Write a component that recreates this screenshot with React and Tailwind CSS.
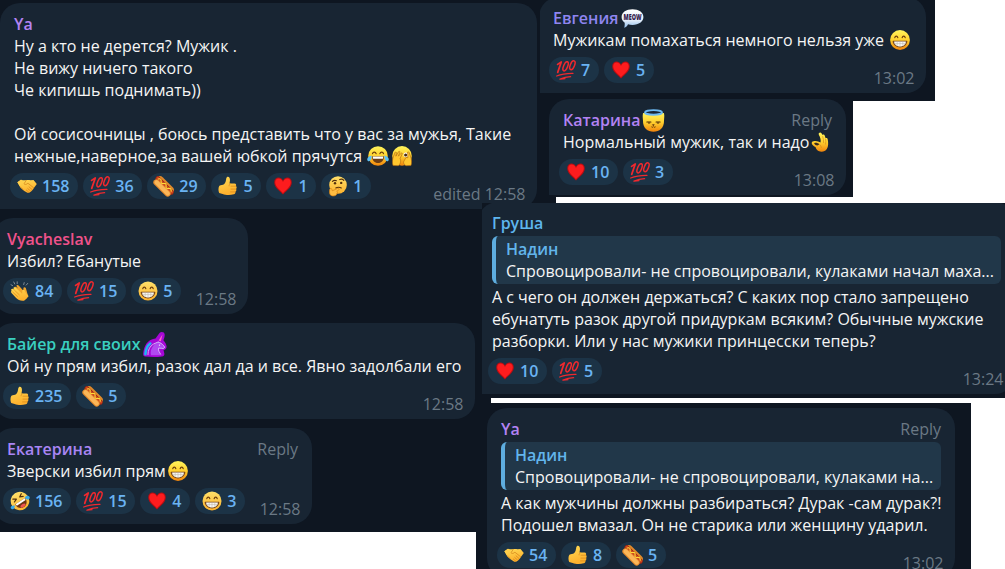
import React from 'react';
import clsx from 'clsx';

// Shared gradients for all emoji
const EmojiDefs = () => (
  <svg className="absolute w-0 h-0" aria-hidden="true">
    <defs>
      <linearGradient id="face" x1="0" y1="0" x2="0" y2="1">
        <stop offset="0" stopColor="#fff45c" />
        <stop offset="0.5" stopColor="#ffd02f" />
        <stop offset="1" stopColor="#f0840c" />
      </linearGradient>
      <linearGradient id="faceFlat" x1="0" y1="0" x2="0" y2="1">
        <stop offset="0" stopColor="#ffe06a" />
        <stop offset="1" stopColor="#fdb22c" />
      </linearGradient>
      <linearGradient id="hand" x1="0" y1="0" x2="0.3" y2="1">
        <stop offset="0" stopColor="#ffdb55" />
        <stop offset="1" stopColor="#fdb02d" />
      </linearGradient>
      <linearGradient id="bubble" x1="0" y1="0" x2="0" y2="1">
        <stop offset="0" stopColor="#ffffff" />
        <stop offset="0.6" stopColor="#e2edfa" />
        <stop offset="1" stopColor="#8fbdec" />
      </linearGradient>
    </defs>
  </svg>
);

const Heart = () => (
  <>
    <path d="M10 18.6C8.6 16 1.2 12 1.2 6.4 1.2 3.4 3.2 1.6 5.5 1.6c2 0 3.6 1.1 4.5 3 .9-1.9 2.5-3 4.5-3 2.3 0 4.3 1.8 4.3 4.8 0 5.600-7.400 9.600-8.800 12.200z" fill="#b80d12" />
    <path d="M10 17.400C8.500 14.900 2.200 11.300 2.200 6.300 2.200 4 3.700 2.500 5.600 2.500c2 0 3.600 1.500 4.400 3.500.8-2 2.400-3.500 4.400-3.500 1.900 0 3.400 1.500 3.400 3.800 0 5-6.300 8.600-7.800 11.100z" fill="#fd1c1e" />
  </>
);

const Hundred = () => (
  <g fill="none" stroke="#f0292e" strokeLinecap="round" strokeLinejoin="round">
    <path d="M1.600 4.400 5.300 1.900 1.700 12.400" strokeWidth="1.700" />
    <ellipse cx="9.600" cy="6.300" rx="2" ry="4.900" transform="rotate(22 9.600 6.300)" strokeWidth="1.500" />
    <ellipse cx="16.400" cy="5.200" rx="2.100" ry="4.700" transform="rotate(22 16.400 5.200)" strokeWidth="1.500" />
    <path d="M.7 16C5.500 14 11 13.200 17 13.300M4 19.200c3.400-1.500 6.700-2.300 10.600-2.500M4 19.200l5-.6" strokeWidth="1.300" />
  </g>
);

const Handshake = () => (
  <>
    <path d="M.4 6.200 4 3.700c2 .9 3.700.7 5.200.4 1.600-.4 3-.1 4.400.2L16.500 4l3.300 4-2.900 3.900c-.8 1.700-2.400 3.200-4 4.300-1.100.9-2.500.8-3.400 0C7 15 4.900 13.500 3.300 11.600z" fill="url(#hand)" />
    <path d="M9.300 4.300 7 7.700c.9 1.300 2.600.8 3.900-.5l5.700 4.600M13.400 14.900l-2.700-2.400M15 13.500l-3-2.700M11.600 16l-2.300-2M3.600 11.300l2.500 2.200" fill="none" stroke="#c97512" strokeWidth=".6" strokeLinecap="round" />
    <path d="M.4 6.200 4 3.700 6 5 2.800 10z" fill="#ffce4b" />
  </>
);

const HotDog = () => (
  <g transform="rotate(45 10 10)">
    <rect x="-.8" y="4.800" width="21.600" height="7.500" rx="3.700" fill="#e08a2b" />
    <rect x="-2" y="6.700" width="24" height="5" rx="2.500" fill="#9f2812" />
    <rect x="-1.200" y="7.600" width="22.400" height="2.600" rx="1.300" fill="#d04a1f" />
    <rect x="-1" y="9.800" width="22" height="6" rx="3" fill="#e58a2c" />
    <rect x="0" y="10.500" width="20" height="4.200" rx="2.100" fill="#fbb658" />
    <path d="M1 9c1.300-2 2.300-2 3.500-.4s2.300 1.500 3.500-.2 2.300-1.500 3.500.2 2.300 1.500 3.500-.2 2.300-1.500 3.800.2" fill="none" stroke="#ffdd38" strokeWidth="1.100" strokeLinecap="round" />
  </g>
);

const ThumbsUp = () => (
  <>
    <path d="M1.400 9.700c1.700-.6 3.400-.7 4.600-1.500C7.700 6.700 8 4.400 8.300 2.300 8.600.4 10.700.2 11.500 1.800c.8 1.700.4 3.900 0 5.700h5c1.600.1 2.100 1.500 1.400 2.500 1.100.8 1 2.300.1 3 .7 1 .4 2.300-.7 2.800.4 1.100-.2 2.300-1.500 2.500-3.900.9-8.200.8-11.100-.4-1.100-.4-2.500-.4-3.500-.9-1-2-1-5.700.2-7.300z" fill="url(#hand)" />
    <path d="M13 10.200h4.700M13 13.100h4.900M12.600 15.900h4.500M12.400 7.700c-.9.500-1.300 1.300-1.300 2.200" fill="none" stroke="#dc8a1c" strokeWidth=".8" strokeLinecap="round" />
  </>
);

const Thinking = () => (
  <>
    <circle cx="10" cy="9" r="8.800" fill="url(#faceFlat)" />
    <circle cx="7" cy="7.300" r="1.200" fill="#53300d" />
    <circle cx="13.200" cy="6.900" r="1.200" fill="#53300d" />
    <path d="M4.400 5.300c1.200-1 2.700-1.200 4-.6M11.700 3.600c1.400-.8 3-.5 4.100.7M7.800 12c1.800-1.100 3.700-1 5.500-.1" fill="none" stroke="#53300d" strokeWidth="1.100" strokeLinecap="round" />
    <path d="M1.700 13.400c.4-1.400 1.900-1.300 2.200.1l.4 1.300 5.300-2.400c1.400-.4 2 1.100.8 1.900l-1.700 1c1.100.6.9 1.700.2 2.200-.1 1.600-1.900 2.600-4.200 2.400-2.700-.2-3.700-2.400-3-6.500z" fill="#ffbe43" stroke="#d78314" strokeWidth=".7" />
  </>
);

const Clap = () => (
  <>
    <path d="M4.200 6.200C5.500 5 6.700 6.100 8 7.500L6.300 4.800c.9-1.300 2.200-.6 3.300.8l4 4.500-.2-3c.4-1.300 1.900-1.300 2.400 0l1.600 5.500c1.300 4.200-1.800 7.100-5.700 6.400z" fill="#f2a52b" />
    <path d="M1.300 8.300c.9-1.100 2-.5 3 .5L3.300 7c.8-1.200 2-.8 3 .2l5.800 5.600c.4-1.400-.1-2.600.3-3.500.9-1.100 2.100-.5 2.600.9.6 2.400 3.100 3.100 3.600 5.100l-4.500 4.400c-3.200.6-6-.6-8.200-2.900L1.500 12c-.8-.9-.4-1.900.3-2.200-.7-.4-.9-1-.5-1.500z" fill="url(#hand)" />
    <path d="m4.500 9.200 4.800 4.600M2.700 11l4.800 4.500" fill="none" stroke="#dc8a1c" strokeWidth=".7" strokeLinecap="round" />
    <path d="M1 3.700l1.700 1M3.800 1l.9 2M7.200.8v1.900M14.200 1.600l-.5 2M17.700 2.400l-1.500 1.700" fill="none" stroke="#7f8b94" strokeWidth="1" strokeLinecap="round" />
  </>
);

const Grin = ({ glossy }) => (
  <>
    <circle cx="10" cy="10" r={glossy ? 9.9 : 9.5} fill={glossy ? 'url(#face)' : 'url(#faceFlat)'} />
    <path d="M4.800 7.700c.5-2 2.500-2 3 0M12.200 7.700c.5-2 2.500-2 3 0" fill="none" stroke="#6b3d0d" strokeWidth="1.200" strokeLinecap="round" />
    <path d="M3.500 10.700h13c.6 0 .9.400.8 1-.6 3.400-3.500 5.700-7.300 5.700s-6.700-2.300-7.300-5.700c-.1-.6.2-1 .8-1z" fill="#7c4a1c" />
    <path d="M4.200 11.400h11.600c.3 2.800-2.500 5-5.800 5s-6.100-2.200-5.800-5z" fill="#f8f8f4" />
    <path d="M4.400 13.600h11.200M7.200 11.500v4.100M10 11.500v4.800M12.800 11.500v4.100" stroke="#b8aea0" strokeWidth=".5" />
  </>
);

const Rofl = () => (
  <>
    <g transform="rotate(-33 10 10)">
      <circle cx="10" cy="10" r="9.300" fill="url(#faceFlat)" />
      <path d="m5 4.600 3 1.800-3.200 1.400M15 4.600l-3 1.800 3.200 1.400" fill="none" stroke="#53300d" strokeWidth="1.200" strokeLinecap="round" strokeLinejoin="round" />
      <path d="M4 10.300h12c.2 4-2.500 7-6 7s-6.200-3-6-7z" fill="#6d3411" />
      <path d="M4.500 10.300h11l-.3 2H4.800z" fill="#fff" />
      <ellipse cx="10" cy="15.500" rx="3" ry="1.500" fill="#ee5350" />
    </g>
    <path d="M4.800 14.600C2.500 14 .6 15 .7 16.700c.3 1.700 2.700 2.100 3.500.5.500-.8.600-1.600.6-2.600z" fill="#38a9ea" />
    <path d="M14.700 6.500c1.200-2 3.400-2.300 4.600-1 1.200 1.400-.1 3.400-1.900 3.100-1.100-.2-1.900-1.100-2.700-2.100z" fill="#38a9ea" />
  </>
);

const Joy = () => (
  <>
    <circle cx="10" cy="10" r="9.800" fill="url(#face)" />
    <path d="M4.500 7.600c.6-2 3-2 3.600 0M11.900 7.600c.6-2 3-2 3.600 0" fill="none" stroke="#6b3d0d" strokeWidth="1.200" strokeLinecap="round" />
    <path d="M4 10.300h12c0 4-2.600 6.800-6 6.800s-6-2.800-6-6.800z" fill="#6b3d16" />
    <path d="M4.700 10.600h10.600l-.4 2.200H5.100z" fill="#fff" />
    <path d="M3.700 9.700C1.500 9.600-.8 11.400-.8 13.500c0 2 2.500 2.400 3.500.6.700-1.300.9-2.900 1-4.400zM16.300 9.700c2.200-.1 4.500 1.700 4.500 3.800 0 2-2.500 2.400-3.500.6-.7-1.300-.9-2.900-1-4.400z" fill="#5cc0f5" />
  </>
);

const Peeking = () => (
  <>
    <circle cx="10" cy="9.900" r="9.800" fill="url(#face)" />
    <circle cx="13.800" cy="8.900" r="2.300" fill="#fff" />
    <circle cx="13.600" cy="9" r="1.500" fill="#4a2a0b" />
    <path d="M1 19.500C0 17 .4 13 1.400 10.700L3 6.500c.6-1 1.500-.6 1.400.4l-.5 3.300L6.500 5.700c.6-.9 1.700-.4 1.300.6L6.400 10.200l2.700-3c.8-.7 1.600.1 1 1L8 12.800c.5.700.8 1.400.7 2.200-.2 2-1 3.600-2.300 4.700zM19 19.500c1-2.500.6-6.500-.4-8.800L17 6.300c-.6-1-1.500-.6-1.400.4l.3 5-2-.2-1.600 3c-.5.700-.8 1.400-.7 2.200.2 1.300 1 2 2.300 3z" fill="#ffc62e" stroke="#a9630f" strokeWidth=".6" />
  </>
);

const OkHand = () => (
  <>
    <path d="M8 1.100C9.200-.3 10.700.7 11.500 3c.6-.7 1.900-.6 2.200.5l.9 2.700c.9-.6 1.900-.1 2.100 1 .7 3.600.8 7.200-.9 9.900-1.700 2.700-5.300 3.300-8.300 2-1.700-.8-2.500-2.400-3-4C3 14.500 1 12.900.7 11.200c-.2-1.700 1.800-2.400 3.600-2.200 1.900.2 3.900.8 5.200 1.600.6-2.800-.2-5.300-1.600-7.700-.4-.7-.3-1.300.1-1.800z" fill="url(#face)" />
    <path d="M3.100 11.200c1.600-.8 3.900-.3 5.200 1.100-1.300 1.900-4 1.300-5.200-1.100z" fill="#3a2a1d" />
    <path d="M11.700 4.500c.7 2 1 4 .9 6.200M14.600 7.200c.3 1.700.3 3.300 0 4.900M8.600 12.500c.9.800 1.600 1.800 1.700 3" fill="none" stroke="#cf8515" strokeWidth=".6" strokeLinecap="round" />
  </>
);

const Meow = () => (
  <>
    <path d="M11.500.3c6.200 0 10.900 3 10.900 7.700 0 4.600-4.600 7.900-10.900 7.900-1.700 0-3.200-.2-4.500-.7-.7 1.800-1.900 3-3.900 3.600.6-1.400.7-3 .6-5C1.700 12.300.6 10.400.6 8 .6 3.300 5.300.3 11.500.3z" fill="url(#bubble)" />
    <text x="0" y="0" transform="translate(11.500 11.400) scale(.72 1)" textAnchor="middle" className="text-[9.500px] font-extrabold font-['Open_Sans',sans-serif]" fill="#32194d" textLength="25" lengthAdjust="spacingAndGlyphs">MEOW</text>
  </>
);

const AngelCat = () => (
  <>
    <path d="M1 4.200c2.300-.5 4 .7 5.500 1.600 3.300-.6 7-.6 10.200 0C18.300 4.900 20 3.700 22 4.200c.6 2.700.1 5.100 0 7.500.2 7.300-4.700 11-10.500 11S.8 19 1 11.700C.9 9.300.4 6.900 1 4.200z" fill="url(#face)" />
    <ellipse cx="11.500" cy="3.400" rx="8.500" ry="2.300" fill="none" stroke="#6cb9f2" strokeWidth="1.900" />
    <path d="M4.900 13h4M14.100 13h4" stroke="#4c2808" strokeWidth="1.200" strokeLinecap="round" />
    <path d="M6 14h2.200M14.900 14h2.200" stroke="#4c2808" strokeWidth="1" />
    <path d="M10.900 15.700h1.300l-.600.700zM9.700 18c.7.500 1.300.4 1.800-.3.500.7 1.100.8 1.800.3" fill="none" stroke="#4c2808" strokeWidth=".8" strokeLinecap="round" />
  </>
);

const Unicorn = () => (
  <>
    <path d="M16.500 1C18-.5 21.600-.2 21.700 2.700c0 2.200-.6 3.800-1.300 5.500 1.700 2 3.100 4.200 3.200 6.400 0 2.200-1.300 3.400-3.100 3.400l.8 3.300c.4 1.900-.5 3-2.300 3.200-5.500.7-11.200.6-16.700.1C.6 24.400 0 23 .2 21.400.9 15.300 3.300 10.200 7.500 8c1.700-1.100 3.500-1.300 5-1.600z" fill="#a607d6" />
    <path d="M15.600 8.600 19.600 2.300 17.800 9.300z" fill="#ff62c6" />
    <path d="M2.400 22.200c.3-4.500 1.600-8.200 4.900-10.700" fill="none" stroke="#1fb5f3" strokeWidth="2.600" strokeLinecap="round" />
    <path d="M8 23.200c-.7-3.400 0-6.700 2.300-9.500 1.300-1.600 2.700-2.600 4.500-3.200l.6-1.400 1.200 1.500c2.300 1 4 2.600 5 4.500-.3 1.500-1.400 1.700-2.700 1.200l-3.300-.2c-.7 2.500 1 4.500 2 7.100z" fill="#b04af0" />
    <path d="M5 22.500c0-4.300 1.700-8.200 5.600-10.500l4.400-2 1.600.6c2.300 1 4 2.600 5 4.500-.3 1.500-1.400 1.700-2.700 1.200l-3.300-.2c-.7 2.500 1 4.100 2 6.100" fill="none" stroke="#d9c4ff" strokeWidth=".9" strokeLinejoin="round" strokeLinecap="round" />
    <circle cx="16.500" cy="13.100" r=".7" fill="#fff" />
  </>
);

const icons = {
  heart: Heart,
  hundred: Hundred,
  handshake: Handshake,
  hotdog: HotDog,
  thumb: ThumbsUp,
  thinking: Thinking,
  clap: Clap,
  grin: Grin,
  rofl: Rofl,
};

// Emoji inside a line of text
const Inline = ({ children, className, box = '0 0 20 20' }) => (
  <svg viewBox={box} className={clsx('inline-block shrink-0 overflow-visible', className)}>
    {children}
  </svg>
);

const Reaction = ({ icon, count }) => {
  const Icon = icons[icon];
  return (
    <div className="flex h-[26px] items-center gap-[5px] rounded-full bg-[#1c3346] pl-[7px] pr-[8.800px] font-semibold text-[#6ab3f3]">
      <svg viewBox="0 0 20 20" className="size-5 overflow-visible"><Icon /></svg>
      <span>{count}</span>
    </div>
  );
};

const Quote = ({ text }) => (
  <div className="my-0.5 h-12 rounded-md border-l-4 border-[#5eaddf] bg-[#213749] px-2.5 py-0.5">
    <div className="font-semibold text-[#62b5ec]">Надин</div>
    <div className="whitespace-nowrap">{text}</div>
  </div>
);

const Message = ({ name, color, badge, reply, quote, lines, reactions, time, className }) => (
  <article className={clsx('flex shrink-0 flex-col bg-[#182533] px-3.5 py-2.5', className)}>
    <header className="flex h-[22px] justify-between">
      <div className={clsx('flex items-center whitespace-nowrap font-semibold', color)}>{name}{badge}</div>
      {reply && <span className="text-[#6b7985]">Reply</span>}
    </header>
    {quote && <Quote text={quote} />}
    {lines.map((line, i) => (
      <div key={i} className="flex h-[22px] items-center whitespace-pre">{line}</div>
    ))}
    <footer className="-mx-1 mt-1.5 flex h-[26px] gap-[5px]">
      {reactions.map(([icon, count]) => <Reaction key={icon} icon={icon} count={count} />)}
      <span className="ml-auto mr-[1.500px] mt-2.5 whitespace-nowrap text-[#6b7985]">{time}</span>
    </footer>
  </article>
);

const App = () => (
  <main className="flex h-[569px] w-[1005px] overflow-hidden bg-white font-['Open_Sans','Noto_Sans',sans-serif] text-base leading-[22px] text-[#f5f5f5]">
    <EmojiDefs />

    {/* Left side of the feed */}
    <div className="w-[476px] shrink-0">
      <section className="flex h-[209px] w-[556px] flex-col bg-[#0e1621] pt-[3px]">
        <Message
          className="w-[537px] rounded-t-[20px] rounded-br-[20px]"
          name="Ya"
          color="text-[#b383f3]"
          lines={[
            'Ну а кто не дерется? Мужик .',
            'Не вижу ничего такого',
            'Че кипишь поднимать))',
            '',
            'Ой сосисочницы , боюсь представить что у вас за мужья, Такие',
            <>
              {'нежные,наверное,за вашей юбкой прячутся '}
              <Inline className="ml-0.5 size-5"><Joy /></Inline>
              <Inline className="ml-1 size-5"><Peeking /></Inline>
            </>,
          ]}
          reactions={[['handshake', 158], ['hundred', 36], ['hotdog', 29], ['thumb', 5], ['heart', 1], ['thinking', 1]]}
          time="edited 12:58"
        />
      </section>
      <section className="flex h-[194px] w-[491px] flex-col gap-[9px] bg-[#0e1621] pt-[9px]">
        <Message
          className="-ml-[7px] w-[255px] rounded-[20px]"
          name="Vyacheslav"
          color="text-[#f0528b]"
          lines={['Избил? Ебанутые']}
          reactions={[['clap', 84], ['hundred', 15], ['grin', 5]]}
          time="12:58"
        />
        <Message
          className="-ml-[7px] w-[482px] rounded-[20px]"
          name="Байер для своих"
          color="text-[#3ad0c0]"
          badge={<Inline box="0 0 24 25" className="ml-[3px] h-[25px] w-6"><Unicorn /></Inline>}
          lines={['Ой ну прям избил, разок дал да и все. Явно задолбали его']}
          reactions={[['thumb', 235], ['hotdog', 5]]}
          time="12:58"
        />
      </section>
      <section className="flex h-[129px] flex-col bg-[#0e1621] pt-[25px]">
        <Message
          className="-ml-[7px] w-[319px] rounded-[20px]"
          name="Екатерина"
          color="text-[#a985f5]"
          reply
          lines={[<>Зверски избил прям<Inline className="ml-0.5 size-5"><Grin glossy /></Inline></>]}
          reactions={[['rofl', 156], ['hundred', 15], ['heart', 4], ['grin', 3]]}
          time="12:58"
        />
      </section>
    </div>

    {/* Right side of the feed, lies over the left one */}
    <div className="z-10 w-[529px] shrink-0">
      <section className="ml-16 flex h-[101px] w-[395px] flex-col overflow-hidden bg-[#0e1621]">
        <Message
          className="-ml-px -mt-[3px] w-[387px] rounded-r-[20px] rounded-tl-[20px]"
          name="Евгения"
          color="text-[#8f85f0]"
          badge={<Inline box="0 0 23 19" className="ml-[3px] h-[19px] w-[23px]"><Meow /></Inline>}
          lines={[<>{'Мужикам помахаться немного нельзя уже '}<Inline className="ml-0.5 size-5"><Grin glossy /></Inline></>]}
          reactions={[['hundred', 7], ['heart', 5]]}
          time="13:02"
        />
      </section>
      <section className="-mt-1 ml-[72px] flex h-[100px] w-[305px] flex-col bg-[#0e1621] pt-0.5">
        <Message
          className="ml-px w-[297px] rounded-r-[20px] rounded-tl-[20px]"
          name="Катарина"
          color="text-[#b383f3]"
          badge={<Inline box="0 0 23 23" className="ml-0.5 size-[23px]"><AngelCat /></Inline>}
          reply
          lines={[<>Нормальный мужик, так и надо<Inline box="0 0 18 20" className="ml-0.5 h-[22px] w-[18px]"><OkHand /></Inline></>]}
          reactions={[['heart', 10], ['hundred', 3]]}
          time="13:08"
        />
      </section>
      <section className="ml-1.5 mt-1.5 flex h-[195px] w-[523px] flex-col overflow-hidden bg-[#0e1621]">
        <Message
          className="-ml-1 -mt-px w-[537px] rounded-[20px] rounded-bl-none"
          name="Груша"
          color="text-[#5eb5ee]"
          quote="Спровоцировали- не спровоцировали, кулаками начал маха..."
          lines={[
            'А с чего он должен держаться? С каких пор стало запрещено',
            'ебунатуть разок другой придуркам всяким? Обычные мужские',
            'разборки. Или у нас мужики принцесски теперь?',
          ]}
          reactions={[['heart', 10], ['hundred', 5]]}
          time="13:24"
        />
      </section>
      <section className="mt-[5px] flex h-[166px] w-[495px] flex-col overflow-hidden bg-[#0e1621] pt-[5px]">
        <Message
          className="ml-[11px] w-[468px] rounded-[20px]"
          name="Ya"
          color="text-[#b383f3]"
          reply
          quote="Спровоцировали- не спровоцировали, кулаками на..."
          lines={[
            'А как мужчины должны разбираться? Дурак -сам дурак?!',
            'Подошел вмазал. Он не старика или женщину ударил.',
          ]}
          reactions={[['handshake', 54], ['thumb', 8], ['hotdog', 5]]}
          time="13:02"
        />
      </section>
    </div>
  </main>
);

export default App;
